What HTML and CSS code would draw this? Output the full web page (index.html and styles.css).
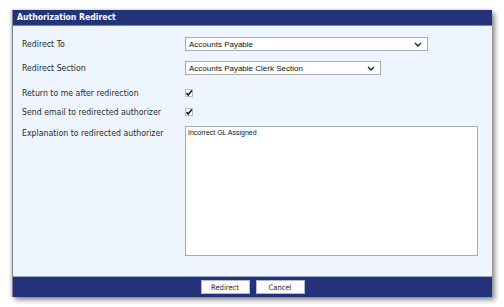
FILE: index.html
```html
<!DOCTYPE html>
<html lang="en">
<head>
  <meta charset="UTF-8">
  <title>Authorization Redirect</title>
  <link rel="stylesheet" href="styles.css">
</head>
<body>

  <div class="dialog">
    <div class="dialog-title">Authorization Redirect</div>

    <div class="dialog-body">
      <div class="row row-select">
        <label>Redirect To</label>
        <div class="select select-wide">
          <span>Accounts Payable</span>
          <svg width="8" height="5" viewBox="0 0 8 5"><path d="M1 1 L4 4 L7 1" fill="none" stroke="#222" stroke-width="1.4"/></svg>
        </div>
      </div>

      <div class="row row-select row-gap">
        <label>Redirect Section</label>
        <div class="select select-mid">
          <span>Accounts Payable Clerk Section</span>
          <svg width="8" height="5" viewBox="0 0 8 5"><path d="M1 1 L4 4 L7 1" fill="none" stroke="#222" stroke-width="1.4"/></svg>
        </div>
      </div>

      <div class="row row-check row-first-check">
        <label>Return to me after redirection</label>
        <span class="checkbox">
          <svg width="8" height="8" viewBox="0 0 8 8"><path d="M1.5 4 L3.2 6 L6.8 1.5" fill="none" stroke="#111" stroke-width="1.5"/></svg>
        </span>
      </div>

      <div class="row row-check">
        <label>Send email to redirected authorizer</label>
        <span class="checkbox">
          <svg width="8" height="8" viewBox="0 0 8 8"><path d="M1.5 4 L3.2 6 L6.8 1.5" fill="none" stroke="#111" stroke-width="1.5"/></svg>
        </span>
      </div>

      <div class="row row-text">
        <label>Explanation to redirected authorizer</label>
        <div class="textarea">Incorrect GL Assigned</div>
      </div>
    </div>

    <div class="dialog-footer">
      <button class="btn">Redirect</button>
      <button class="btn">Cancel</button>
    </div>
  </div>

</body>
</html>
```

FILE: styles.css
```css
:root {
  --navy: #243379;
  --panel: #eef5fe;
  --field-border: #a9acb2;
}

body {
  margin: 0;
  padding: 10px 12px;
  background: #fff;
  font-family: "DejaVu Sans Condensed", "DejaVu Sans", sans-serif;
  font-stretch: condensed;
  font-size: 8.7px;
  color: #2b2b2b;
}

.dialog {
  width: 480px;
  height: 287px;
  box-sizing: border-box;
  display: flex;
  flex-direction: column;
  background: var(--panel);
  border-left: 1px solid #7d8296;
  box-shadow: 3px 3px 5px rgba(0,0,0,0.45), -1px 0 3px rgba(0,0,0,0.2);
}

.dialog-title {
  height: 15px;
  line-height: 15px;
  padding-left: 4px;
  background: var(--navy);
  border-bottom: 1px solid #7282bd;
  color: #fff;
  font-weight: bold;
  font-size: 8.6px;
}

.dialog-body {
  flex: 1;
  padding: 11px 0 0 9px;
}

.row {
  display: grid;
  grid-template-columns: 163px 1fr;
  align-items: center;
}

.row label {
  white-space: nowrap;
}

.row-gap {
  margin-top: 10px;
}

.row-check {
  height: 19px;
}

.row-first-check {
  margin-top: 8px;
}

.row-text {
  margin-top: 5px;
  align-items: start;
}

.row-text label {
  padding-top: 2px;
}

.select {
  height: 14px;
  box-sizing: border-box;
  display: flex;
  justify-content: space-between;
  align-items: center;
  padding: 0 5px 0 3px;
  background: #fff;
  border: 1px solid var(--field-border);
  font-family: "Liberation Sans", Arial, sans-serif;
  font-stretch: normal;
  font-size: 8px;
  color: #111;
}

.select-wide {
  width: 243px;
}

.select-mid {
  width: 196px;
}

.checkbox {
  width: 8px;
  height: 8px;
  display: flex;
  align-items: center;
  justify-content: center;
  background: #fff;
  border: 1px solid #b8bcc4;
  box-sizing: border-box;
}

.checkbox svg {
  flex: none;
}

.textarea {
  width: 293px;
  height: 130px;
  box-sizing: border-box;
  padding: 2px 2px;
  background: #fff;
  border: 1px solid var(--field-border);
  font-family: "Liberation Sans", Arial, sans-serif;
  font-stretch: normal;
  font-size: 7px;
  color: #111;
}

.dialog-footer {
  height: 20px;
  display: flex;
  justify-content: center;
  align-items: center;
  gap: 6px;
  background: var(--navy);
  border-top: 1px solid #9aa6c8;
}

.btn {
  width: 49px;
  height: 14px;
  padding: 0;
  background: #fff;
  border: 1px solid #b5b9c4;
  border-radius: 0;
  font-family: "DejaVu Sans Condensed", "DejaVu Sans", sans-serif;
  font-stretch: condensed;
  font-size: 7.5px;
  color: #222;
}
```
